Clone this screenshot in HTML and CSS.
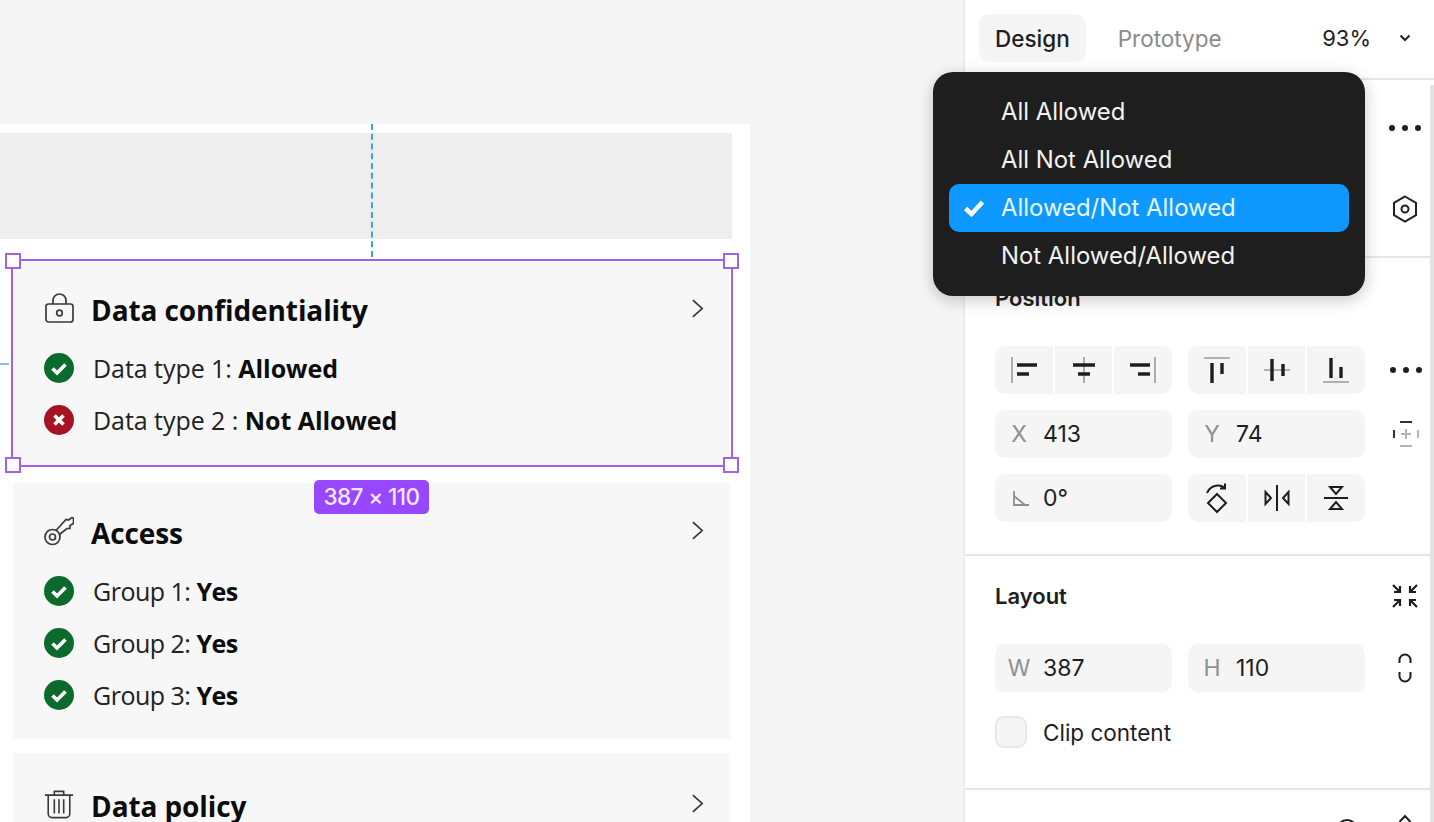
FILE: index.html
```html
<!DOCTYPE html>
<html lang="en">
<head>
<meta charset="utf-8">
<title>Design panel</title>
<link rel="stylesheet" href="styles.css">
</head>
<body>
<main class="canvas">
  <div class="frame">
    <div class="placeholder"></div>
    <section class="card card-first">
      <header class="card-head">
        <svg class="head-icon" viewBox="0 0 30 30"><rect x="2" y="11" width="27" height="18" rx="2.500"/><path d="M9 11V7.500a6.500 6.500 0 0 1 13 0V11"/><circle cx="15.500" cy="20" r="2.800"/></svg>
        <h2 class="card-title">Data confidentiality</h2>
        <svg class="chevron" viewBox="0 0 14 22"><path d="M2 2l10 9-10 9"/></svg>
      </header>
      <p class="row"><svg class="status" viewBox="0 0 30 30"><circle class="ok" cx="15" cy="15" r="15"/><path class="mark" d="M8.500 15.500l4.500 4.500 8.500-8.500"/></svg><span>Data type 1: <b>Allowed</b></span></p>
      <p class="row"><svg class="status" viewBox="0 0 30 30"><circle class="bad" cx="15" cy="15" r="15"/><path class="mark" d="M10.500 10.500l9 9M19.500 10.500l-9 9"/></svg><span>Data type 2 : <b>Not Allowed</b></span></p>
    </section>
    <section class="card card-second">
      <header class="card-head">
        <svg class="head-icon" viewBox="0 0 30 30"><circle cx="8.500" cy="21" r="7.500"/><circle cx="8.500" cy="21" r="3"/><path d="M12 14.500L22 3.500l2.500.5L28 1.500c1 0 1.500.5 1.500 1.500v4.500L26 9.500v3h-3l-7.500 6"/></svg>
        <h2 class="card-title">Access</h2>
        <svg class="chevron" viewBox="0 0 14 22"><path d="M2 2l10 9-10 9"/></svg>
      </header>
      <p class="row"><svg class="status" viewBox="0 0 30 30"><circle class="ok" cx="15" cy="15" r="15"/><path class="mark" d="M8.500 15.500l4.500 4.500 8.500-8.500"/></svg><span>Group 1: <b>Yes</b></span></p>
      <p class="row"><svg class="status" viewBox="0 0 30 30"><circle class="ok" cx="15" cy="15" r="15"/><path class="mark" d="M8.500 15.500l4.500 4.500 8.500-8.500"/></svg><span>Group 2: <b>Yes</b></span></p>
      <p class="row"><svg class="status" viewBox="0 0 30 30"><circle class="ok" cx="15" cy="15" r="15"/><path class="mark" d="M8.500 15.500l4.500 4.500 8.500-8.500"/></svg><span>Group 3: <b>Yes</b></span></p>
    </section>
    <section class="card card-third">
      <header class="card-head">
        <svg class="head-icon" viewBox="0 0 32 32"><path d="M1 6.500h30M11 6.500V2.500h10v4M4.500 6.500v20a4 4 0 0 0 4 4h15a4 4 0 0 0 4-4v-20M11 11v15M16 11v15M21 11v15"/></svg>
        <h2 class="card-title">Data policy</h2>
        <svg class="chevron" viewBox="0 0 14 22"><path d="M2 2l10 9-10 9"/></svg>
      </header>
    </section>
  </div>
  <div class="guide-v"></div>
  <div class="guide-h"></div>
  <div class="selection">
    <i class="handle tl"></i><i class="handle tr"></i><i class="handle bl"></i><i class="handle br"></i>
  </div>
  <div class="size-tag">387 × 110</div>
</main>

<aside class="panel">
  <header class="tabs">
    <span class="tab tab-active">Design</span>
    <span class="tab">Prototype</span>
    <span class="zoom">93%</span>
    <svg class="zoom-caret" viewBox="0 0 12 8"><path d="M1.500 1.500L6 6l4.500-4.500"/></svg>
  </header>

  <section class="section section-component">
    <svg class="more" viewBox="0 0 32 6"><circle cx="3" cy="3" r="3"/><circle cx="16" cy="3" r="3"/><circle cx="29" cy="3" r="3"/></svg>
    <svg class="hex" viewBox="0 0 26 28"><path d="M13 1.500l11 6.300v12.400l-11 6.300-11-6.300V7.800z"/><circle cx="13" cy="14" r="3.500"/></svg>
  </section>

  <section class="section section-position">
    <h3 class="section-title">Position</h3>
    <div class="controls">
      <div class="segmented">
        <span class="cell"><svg class="tool" viewBox="0 0 28 28"><path class="dim" d="M2 1v26"/><path class="bar" d="M7 9h20M7 18h12"/></svg></span>
        <span class="cell"><svg class="tool" viewBox="0 0 28 28"><path class="dim" d="M14 1v26"/><path class="bar" d="M3 9h22M8 18h12"/></svg></span>
        <span class="cell"><svg class="tool" viewBox="0 0 28 28"><path class="dim" d="M26 1v26"/><path class="bar" d="M1 9h20M9 18h12"/></svg></span>
      </div>
      <div class="segmented">
        <span class="cell"><svg class="tool" viewBox="0 0 28 28"><path class="dim" d="M1 2h26"/><path class="bar" d="M9 7v20M19 7v11"/></svg></span>
        <span class="cell"><svg class="tool" viewBox="0 0 28 28"><path class="dim" d="M1 14h26"/><path class="bar" d="M9 3v22M20 8v12"/></svg></span>
        <span class="cell"><svg class="tool" viewBox="0 0 28 28"><path class="dim" d="M1 26h26"/><path class="bar" d="M9 2v20M19 11v11"/></svg></span>
      </div>
      <svg class="more" viewBox="0 0 32 6"><circle cx="3" cy="3" r="3"/><circle cx="16" cy="3" r="3"/><circle cx="29" cy="3" r="3"/></svg>

      <div class="field"><span class="field-label">X</span><span>413</span></div>
      <div class="field"><span class="field-label">Y</span><span>74</span></div>
      <svg class="side-icon" viewBox="0 0 28 28"><path class="ink" d="M8 2h12M2 10v8"/><path class="faint" d="M8 26h12M26 10v8M14 9v10M9 14h10"/></svg>

      <div class="field"><svg class="angle" viewBox="0 0 18 18"><path d="M2 2v14h15M2 7l11 9"/></svg><span>0°</span></div>
      <div class="segmented">
        <span class="cell"><svg class="flip" viewBox="0 0 28 32"><path d="M4 11C6 6 11 3 16 3.500c2 .2 4 1 6 2.500M22 1.500V6.500h-5"/><path d="M14 12l9 9-9 9-9-9z"/></svg></span>
        <span class="cell"><svg class="flip" viewBox="0 0 28 32"><path d="M14 3v26M2.500 10l5.500 6-5.500 6zM25.500 10L20 16l5.500 6z"/></svg></span>
        <span class="cell"><svg class="flip" viewBox="0 0 28 32"><path d="M2 16h24M8 5h12l-6 7zM8 27h12l-6-7z"/></svg></span>
      </div>
    </div>
  </section>

  <section class="section section-layout">
    <div class="section-head">
      <h3 class="section-title">Layout</h3>
      <svg class="collapse" viewBox="0 0 26 24"><path d="M1 1l7 7M8 2v6H2M25 1l-7 7M18 2v6h6M1 23l7-7M8 22v-6H2M25 23l-7-7M18 22v-6h6"/></svg>
    </div>
    <div class="controls">
      <div class="field"><span class="field-label">W</span><span>387</span></div>
      <div class="field"><span class="field-label">H</span><span>110</span></div>
      <svg class="link" viewBox="0 0 14 30"><path d="M1.500 10V7a5.500 5.500 0 0 1 11 0v3M1.500 19v4a5.500 5.500 0 0 0 11 0v-4"/></svg>
    </div>
    <label class="clip"><span class="checkbox"></span>Clip content</label>
  </section>

  <section class="section section-next">
    <svg class="next-eye" viewBox="0 0 30 20"><path d="M2 14C6 6 10 3 15 3s9 3 13 11"/></svg>
    <svg class="next-caret" viewBox="0 0 14 10"><path d="M1.500 8L7 2l5.500 6"/></svg>
  </section>
  <div class="scrollbar"></div>
</aside>

<nav class="menu">
  <div class="menu-item">All Allowed</div>
  <div class="menu-item">All Not Allowed</div>
  <div class="menu-item menu-item-on"><svg class="menu-check" viewBox="0 0 22 18"><path d="M2.500 9.500l6 5.500L19.500 3"/></svg>Allowed/Not Allowed</div>
  <div class="menu-item">Not Allowed/Allowed</div>
</nav>
</body>
</html>
```
FILE: styles.css
```css
* { box-sizing: border-box; }
html, body { height: 100%; }
body {
  margin: 0;
  display: flex;
  width: 1434px;
  height: 822px;
  overflow: hidden;
  position: relative;
  background: #f5f5f5;
  font-family: "Inter", "Liberation Sans", sans-serif;
  color: #1e1e1e;
}

/* Canvas */
.canvas { position: relative; width: 963px; flex: none; height: 822px; overflow: hidden; background: #f5f5f5; }
.frame { width: 750px; margin-top: 124px; padding: 9px 18px 60px 0; background: #fff; }
.placeholder { height: 106px; background: #eeeeee; }
.card {
  margin: 0 2px 0 13px;
  padding: 26px 26px 17px 31px;
  background: #f7f7f7;
  font-family: "Open Sans", "Liberation Sans", sans-serif;
  color: #111;
}
.card-first { margin-top: 22px; height: 205px; padding-top: 25px; }
.card-second { margin-top: 17px; height: 256px; }
.card-third { margin-top: 14px; padding-top: 29px; }
.card-head { display: flex; align-items: center; height: 48px; margin-bottom: 9px; }
.card-first .card-head { margin-bottom: 8px; }
.card-second .card-head { margin-bottom: 8px; }
.head-icon { width: 30px; height: 30px; flex: none; fill: none; stroke: #3a3a3a; stroke-width: 1.700; margin-right: 17px; position: relative; top: -2px; }
.card-title { margin: 0; font-size: 28px; font-weight: 700; letter-spacing: -0.1px; line-height: 48px; color: #0c0c0c; }
.chevron { width: 13px; height: 21px; margin-left: auto; fill: none; stroke: #333; stroke-width: 1.800; position: relative; top: -3px; }
.card-first .chevron { top: -2px; }
.row { display: flex; align-items: center; height: 52px; margin: 0; font-size: 25px; letter-spacing: -0.05px; color: #222; }
.card-second .row { letter-spacing: -0.5px; }
.row b { font-weight: 700; color: #0c0c0c; }
.status { width: 30px; height: 30px; flex: none; margin-right: 19px; }
.ok { fill: #0a6b2c; }
.bad { fill: #a51324; }
.mark { fill: none; stroke: #fff; stroke-width: 3.600; }

/* Overlays on the canvas */
.guide-v { position: absolute; left: 371px; top: 124px; height: 133px; border-left: 2px dashed #3aa5dc; }
.guide-h { position: absolute; left: 0; top: 363px; width: 9px; border-top: 2px dashed #7cc0e6; }
.selection { position: absolute; left: 11px; top: 259px; width: 722px; height: 208px; border: 2px solid #a064e2; }
.handle { position: absolute; width: 16px; height: 16px; background: #fff; border: 2px solid #a064e2; }
.tl { left: -8px; top: -8px; }
.tr { right: -8px; top: -8px; }
.bl { left: -8px; bottom: -8px; }
.br { right: -8px; bottom: -8px; }
.size-tag {
  position: absolute; left: 314px; top: 480px; width: 115px; height: 34px;
  border-radius: 5px; background: #9747ff; color: #f3e8ff;
  font-size: 22.500px; font-weight: 500; line-height: 34px; text-align: center; letter-spacing: -0.6px;
}

/* Right panel */
.panel { position: relative; width: 471px; flex: none; height: 822px; background: #fff; border-left: 2px solid #ececec; overflow: hidden; }
.tabs { display: flex; align-items: center; height: 80px; padding: 0 23px 2px 14px; border-bottom: 2px solid #e6e6e6; font-size: 22.500px; }
.tab { display: block; padding: 0 16px; height: 48px; line-height: 50px; color: #8a8a8a; margin-right: 16px; font-weight: 400; }
.tab-active { background: #f5f5f5; border-radius: 10px; color: #1e1e1e; font-weight: 500; }
.zoom { margin-left: auto; font-size: 22px; }
.zoom-caret { width: 12px; height: 8px; margin-left: 28px; fill: none; stroke: #222; stroke-width: 2; }

.section { border-bottom: 2px solid #e6e6e6; padding: 0 14px 0 30px; position: relative; }
.section-component { height: 178px; }
.section-component .more { position: absolute; right: 13px; top: 45px; }
.hex { position: absolute; right: 16px; top: 115px; width: 26px; height: 28px; fill: none; stroke: #222; stroke-width: 2; }
.more { width: 32px; height: 6px; fill: #1e1e1e; }
.controls .more { margin-left: 9px; }
.section-position { height: 298px; padding-top: 23px; }
.section-layout { height: 234px; padding-top: 23px; }
.section-title { margin: 0; font-size: 22px; font-weight: 600; line-height: 34px; }
.section-position .section-title { margin-bottom: 31px; }
.section-head { display: flex; justify-content: space-between; align-items: center; height: 34px; margin-bottom: 31px; }
.controls { display: grid; grid-template-columns: 177px 177px 40px; column-gap: 16px; row-gap: 16px; align-items: center; justify-items: start; }
.segmented { display: flex; gap: 2px; width: 177px; height: 48px; border-radius: 10px; overflow: hidden; }
.cell { flex: 1; display: flex; align-items: center; justify-content: center; background: #f5f5f5; }
.tool { width: 28px; height: 28px; fill: none; }
.dim { stroke: #9a9a9a; stroke-width: 1.600; }
.bar { stroke: #1e1e1e; stroke-width: 3.400; }
.field { display: flex; align-items: center; width: 177px; height: 48px; padding-left: 10px; border-radius: 10px; background: #f5f5f5; font-size: 23px; }
.field-label { width: 28px; margin-right: 10px; text-align: center; color: #8f8f8f; font-weight: 400; }
.angle { width: 18px; height: 18px; margin: 0 13px 0 7px; fill: none; stroke: #8f8f8f; stroke-width: 1.800; }
.flip { width: 28px; height: 32px; fill: none; stroke: #1e1e1e; stroke-width: 2; }
.side-icon { width: 28px; height: 28px; fill: none; stroke-width: 2; margin-left: 11px; }
.ink { stroke: #333; }
.faint { stroke: #b5b5b5; }
.collapse { width: 26px; height: 24px; fill: none; stroke: #1e1e1e; stroke-width: 2.200; margin-right: 2px; }
.link { width: 14px; height: 30px; fill: none; stroke: #1e1e1e; stroke-width: 2; margin-left: 17px; }
.clip { display: flex; align-items: center; height: 32px; margin-top: 24px; font-size: 22.500px; }
.checkbox { width: 32px; height: 32px; border-radius: 9px; background: #f5f5f5; border: 2px solid #e8e8e8; margin-right: 16px; }
.section-next { border: 0; height: 40px; }
.next-eye { position: absolute; left: 367px; top: 27px; width: 30px; height: 20px; fill: none; stroke: #1e1e1e; stroke-width: 2; }
.next-caret { position: absolute; right: 22px; top: 24px; width: 14px; height: 10px; fill: none; stroke: #1e1e1e; stroke-width: 2; }
.scrollbar { position: absolute; right: 0; top: 85px; bottom: 0; width: 4px; background: #e4e4e4; }

/* Dropdown */
.menu {
  position: absolute; left: 933px; top: 72px; width: 432px; height: 224px;
  padding: 16px; border-radius: 20px; background: #1e1e1e; color: #f2f2f2;
  box-shadow: 0 4px 16px rgba(0, 0, 0, 0.22); font-size: 23.900px;
}
.menu-item { position: relative; height: 48px; line-height: 48px; padding-left: 52px; border-radius: 10px; }
.menu-item-on { background: #0d99ff; color: #e8f8ff; }
.menu-check { position: absolute; left: 14px; top: 15px; width: 22px; height: 18px; fill: none; stroke: #fff; stroke-width: 4.500; }
```
